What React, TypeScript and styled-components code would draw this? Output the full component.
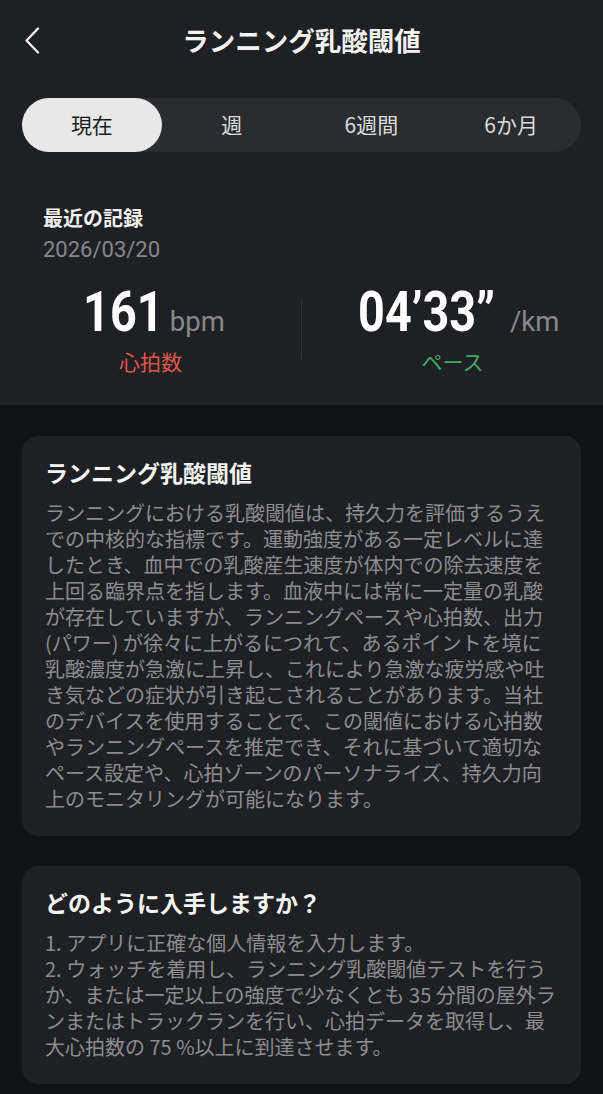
import React from "react";
import styled, { createGlobalStyle } from "styled-components";

const GlobalStyle = createGlobalStyle`
  html, body {
    margin: 0;
    padding: 0;
    background: #111216;
  }
  body {
    font-family: "Noto Sans CJK JP", "Noto Sans", sans-serif;
    -webkit-font-smoothing: antialiased;
  }
`;

const Page = styled.div`
  width: 603px;
  min-height: 1094px;
  background: #111216;
  display: flex;
  flex-direction: column;
  overflow: hidden;
`;

const Top = styled.section`
  background: #1f2023;
  padding: 0 22px 30px;
  display: flex;
  flex-direction: column;
`;

const Header = styled.header`
  height: 80px;
  display: grid;
  grid-template-columns: 40px 1fr 40px;
  align-items: center;
`;

const BackButton = styled.button`
  width: 40px;
  height: 40px;
  padding: 0;
  border: 0;
  background: transparent;
  display: flex;
  align-items: center;
  justify-content: flex-start;
  margin-left: 2px;
`;

const Title = styled.h1`
  margin: 0;
  text-align: center;
  font-size: 26.5px;
  font-weight: 700;
  color: #f3f3f3;
  line-height: 36px;
`;

const Segmented = styled.div`
  margin-top: 18px;
  height: 54px;
  border-radius: 27px;
  background: #2b2c2f;
  display: grid;
  grid-template-columns: repeat(4, 1fr);
`;

const Segment = styled.div<{ $active?: boolean }>`
  border-radius: 27px;
  display: flex;
  align-items: center;
  justify-content: center;
  font-size: 21px;
  line-height: 26px;
  padding-bottom: 3px;
  color: ${(p) => (p.$active ? "#1c1c1e" : "#dcdcdc")};
  background: ${(p) => (p.$active ? "#e8e8e8" : "transparent")};
`;

const RecordHead = styled.div`
  margin-top: 52px;
  padding-left: 21px;
  display: flex;
  flex-direction: column;
`;

const RecordTitle = styled.div`
  font-size: 20px;
  font-weight: 700;
  color: #f0f0f0;
  line-height: 28px;
`;

const RecordDate = styled.div`
  margin-top: 4px;
  font-family: Roboto, "Noto Sans", sans-serif;
  font-size: 22px;
  color: #88888b;
  line-height: 28px;
`;

const Stats = styled.div`
  margin: 18px -22px 0;
  display: flex;
  align-items: stretch;
`;

const Stat = styled.div`
  flex: 1;
  display: flex;
  flex-direction: column;
  align-items: center;
`;

const Divider = styled.div`
  width: 1px;
  height: 60px;
  align-self: center;
  background: #34353a;
`;

const ValueLine = styled.div`
  height: 60px;
  display: flex;
  align-items: baseline;
  white-space: nowrap;
`;

const BigNumber = styled.span`
  display: inline-block;
  font-family: Roboto, "Liberation Sans", sans-serif;
  font-weight: 700;
  font-size: 55px;
  line-height: 60px;
  color: #ffffff;
  transform: scaleX(0.85);
  transform-origin: center;
`;

const Unit = styled.span<{ $gap: number }>`
  font-family: Roboto, "Noto Sans", sans-serif;
  font-size: 27.5px;
  line-height: 60px;
  color: #88888b;
  margin-left: ${(p) => p.$gap}px;
`;

const StatLabel = styled.div<{ $color: string }>`
  margin-top: 5px;
  font-size: 21px;
  line-height: 28px;
  color: ${(p) => p.$color};
`;

const Body = styled.main`
  padding: 31px 22px 10px;
  display: flex;
  flex-direction: column;
  gap: 30px;
`;

const Card = styled.section`
  background: #1f2023;
  border-radius: 16px;
  padding: 21px 20px 24px 23px;
`;

const CardTitle = styled.h2`
  margin: 0 0 13px;
  font-size: 23px;
  font-weight: 700;
  color: #f5f5f5;
  line-height: 30px;
`;

const CardText = styled.p`
  margin: 0;
  font-size: 20px;
  line-height: 26px;
  color: #8d8d90;
`;

const TextLine = styled.span`
  display: block;
  white-space: nowrap;
`;

const ChevronLeft = () => (
  <svg width="16" height="27" viewBox="0 0 16 27" fill="none">
    <path
      d="M14 1.5 L2.5 13.5 L14 25.5"
      stroke="#f2f2f2"
      strokeWidth="2.3"
      strokeLinecap="round"
      strokeLinejoin="round"
    />
  </svg>
);

const segments = ["現在", "週", "6週間", "6か月"];

const aboutLines = [
  "ランニングにおける乳酸閾値は、持久力を評価するうえ",
  "での中核的な指標です。運動強度がある一定レベルに達",
  "したとき、血中での乳酸産生速度が体内での除去速度を",
  "上回る臨界点を指します。血液中には常に一定量の乳酸",
  "が存在していますが、ランニングペースや心拍数、出力",
  "(パワー) が徐々に上がるにつれて、あるポイントを境に",
  "乳酸濃度が急激に上昇し、これにより急激な疲労感や吐",
  "き気などの症状が引き起こされることがあります。当社",
  "のデバイスを使用することで、この閾値における心拍数",
  "やランニングペースを推定でき、それに基づいて適切な",
  "ペース設定や、心拍ゾーンのパーソナライズ、持久力向",
  "上のモニタリングが可能になります。",
];

const howLines = [
  "1. アプリに正確な個人情報を入力します。",
  "2. ウォッチを着用し、ランニング乳酸閾値テストを行う",
  "か、または一定以上の強度で少なくとも 35 分間の屋外ラ",
  "ンまたはトラックランを行い、心拍データを取得し、最",
  "大心拍数の 75 %以上に到達させます。",
];

export default function App() {
  return (
    <>
      <GlobalStyle />
      <Page>
        <Top>
          <Header>
            <BackButton aria-label="戻る">
              <ChevronLeft />
            </BackButton>
            <Title>ランニング乳酸閾値</Title>
            <span />
          </Header>
          <Segmented>
            {segments.map((s, i) => (
              <Segment key={s} $active={i === 0}>
                {s}
              </Segment>
            ))}
          </Segmented>
          <RecordHead>
            <RecordTitle>最近の記録</RecordTitle>
            <RecordDate>2026/03/20</RecordDate>
          </RecordHead>
          <Stats>
            <Stat>
              <ValueLine>
                <BigNumber>161</BigNumber>
                <Unit $gap={-1}>bpm</Unit>
              </ValueLine>
              <StatLabel $color="#df574d">心拍数</StatLabel>
            </Stat>
            <Divider />
            <Stat>
              <ValueLine>
                <BigNumber>04’33”</BigNumber>
                <Unit $gap={3}>/km</Unit>
              </ValueLine>
              <StatLabel $color="#3fa96a">ペース</StatLabel>
            </Stat>
          </Stats>
        </Top>
        <Body>
          <Card>
            <CardTitle>ランニング乳酸閾値</CardTitle>
            <CardText>
              {aboutLines.map((l, i) => (
                <TextLine key={i}>{l}</TextLine>
              ))}
            </CardText>
          </Card>
          <Card>
            <CardTitle>どのように入手しますか？</CardTitle>
            <CardText>
              {howLines.map((l, i) => (
                <TextLine key={i}>{l}</TextLine>
              ))}
            </CardText>
          </Card>
        </Body>
      </Page>
    </>
  );
}
